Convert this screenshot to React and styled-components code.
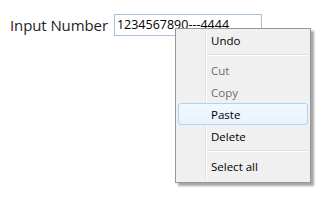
import React from "react";
import styled, { createGlobalStyle } from "styled-components";

const Global = createGlobalStyle`
  body {
    margin: 0;
    background: #ffffff;
    font-family: "Open Sans", "Noto Sans", sans-serif;
  }
`;

const Page = styled.div`
  position: relative;
  width: 335px;
  height: 204px;
  overflow: hidden;
`;

const Field = styled.div`
  display: flex;
  align-items: center;
  gap: 6px;
  padding: 14px 0 0 10px;
`;

const Label = styled.label`
  font-size: 15px;
  color: #1e1e1e;
  letter-spacing: -0.1px;
`;

const Input = styled.div`
  box-sizing: border-box;
  width: 148px;
  height: 22px;
  border: 1px solid #a9bfd6;
  padding: 2px 2px 0;
  font-size: 12.5px;
  line-height: 16px;
  color: #000;
  white-space: nowrap;
  overflow: hidden;
`;

const Menu = styled.div`
  position: absolute;
  left: 175px;
  top: 28px;
  box-sizing: border-box;
  width: 136px;
  height: 155px;
  padding: 0 2px 2px;
  background: #f0f0f0;
  border: 1px solid #979797;
  box-shadow: 3px 3px 2px rgba(0, 0, 0, 0.35);
  font-family: "Open Sans", "Noto Sans", sans-serif;
  font-size: 11.5px;
  &::before {
    content: "";
    position: absolute;
    left: 29px;
    top: 2px;
    bottom: 2px;
    width: 1px;
    background: #e2e3e3;
    border-right: 1px solid #ffffff;
  }
`;

const Item = styled.div`
  position: relative;
  box-sizing: border-box;
  height: 22px;
  display: flex;
  align-items: center;
  padding-left: 32px;
  color: ${p => (p.disabled ? "#6d6d6d" : "#000000")};
  border: 1px solid ${p => (p.active ? "#aed3f4" : "transparent")};
  border-radius: 3px;
  background: ${p =>
    p.active ? "linear-gradient(#f3f8fd, #e9f2fc)" : "transparent"};
  z-index: 1;
`;

const Separator = styled.div`
  height: 1px;
  margin: 3px 1px 3px 30px;
  background: #e0e0e0;
  border-bottom: 1px solid #ffffff;
`;

const items = [
  { label: "Undo" },
  { sep: true },
  { label: "Cut", disabled: true },
  { label: "Copy", disabled: true },
  { label: "Paste", active: true },
  { label: "Delete" },
  { sep: true },
  { label: "Select all" }
];

const App = () => (
  <Page>
    <Global />
    <Field>
      <Label>Input Number</Label>
      <Input>1234567890---4444</Input>
    </Field>
    <Menu>
      {items.map((it, i) =>
        it.sep ? (
          <Separator key={i} />
        ) : (
          <Item key={i} disabled={it.disabled} active={it.active}>
            {it.label}
          </Item>
        )
      )}
    </Menu>
  </Page>
);

export default App;
